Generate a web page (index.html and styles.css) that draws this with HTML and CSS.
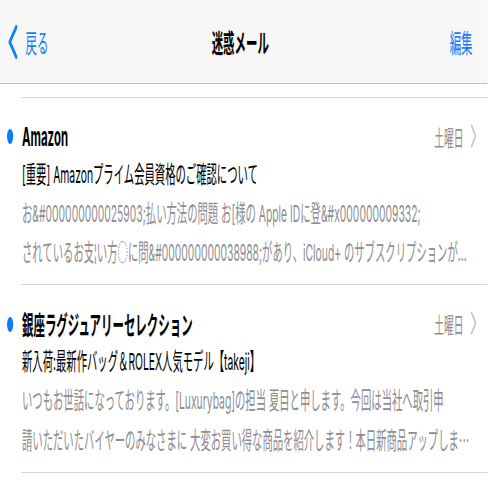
FILE: index.html
```html
<!DOCTYPE html>
<html lang="ja">
<head>
    <meta charset="UTF-8">
    <meta name="viewport" content="width=device-width, initial-scale=1.0">
    <title>迷惑メール</title>
    <link rel="stylesheet" href="styles.css">
</head>
<body>

    <div class="screen">

        <!-- Barra de navegação -->
        <header class="navbar">
            <a class="back" href="#">
                <svg viewBox="0 0 22 34"><polyline points="19,2 4,17 19,32" /></svg>
                <span>戻る</span>
            </a>
            <h1 class="title">迷惑メール</h1>
            <a class="edit" href="#">編集</a>
        </header>

        <!-- Lista de mensagens -->
        <ul class="mail-list">
            <li class="mail">
                <span class="dot"></span>
                <div class="mail-body">
                    <div class="mail-head">
                        <span class="sender">Amazon</span>
                        <span class="date">土曜日 <svg viewBox="0 0 14 24"><polyline points="2,1 12,12 2,23" /></svg></span>
                    </div>
                    <div class="subject">[重要] Amazonプライム会員資格のご確認について</div>
                    <div class="preview">
                        <div class="line">お&amp;#000000000025903;払い方法の問題 お[様の Apple IDに登&amp;#x000000009332;</div>
                        <div class="line">されているお支¦い方◌に問&amp;#000000000038988;があり、iCloud+ のサブスクリプションが...</div>
                    </div>
                </div>
            </li>

            <li class="mail">
                <span class="dot"></span>
                <div class="mail-body">
                    <div class="mail-head">
                        <span class="sender">銀座ラグジュアリーセレクション</span>
                        <span class="date">土曜日 <svg viewBox="0 0 14 24"><polyline points="2,1 12,12 2,23" /></svg></span>
                    </div>
                    <div class="subject">新入荷:最新作バッグ＆ROLEX人気モデル【takeji】</div>
                    <div class="preview">
                        <div class="line">いつもお世話になっております。[Luxurybag]の担当 夏目と申します。今回は当社へ取引申</div>
                        <div class="line">請いただいたバイヤーのみなさまに 大変お買い得な商品を紹介します！本日新商品アップしま<span class="jp">…</span></div>
                    </div>
                </div>
            </li>
        </ul>

    </div>

</body>
</html>
```

FILE: styles.css
```css
html, body { margin: 0; overflow: hidden; background: #fff; }
body { font-family: "Inter", "Noto Sans CJK JP", sans-serif; color: #000; }

/* a captura está comprimida na horizontal: a tela é montada larga e escalada */
.screen { width: 1108px; transform: scaleX(0.44); transform-origin: 0 0; }

.navbar { display: grid; grid-template-columns: 1fr auto 1fr; align-items: center; height: 83px; padding: 0 34px 0 18px; background: #f7f7f7; border-bottom: 1px solid #bcbcbc; }
.back { display: flex; align-items: center; gap: 18px; color: #147efb; text-decoration: none; font-size: 26px; }
.back svg { width: 22px; height: 34px; fill: none; stroke: #147efb; stroke-width: 5; stroke-linecap: round; stroke-linejoin: round; }
.title { margin: 0; font-size: 26px; font-weight: 700; }
.edit { justify-self: end; color: #147efb; text-decoration: none; font-size: 26px; }

.mail-list { list-style: none; margin: 13px 0 0; padding: 0; }
.mail { display: grid; grid-template-columns: 48px 1fr; }
.dot { width: 14px; height: 15px; margin: 32px 0 0 16px; border-radius: 50%; background: #0a7aff; }
.mail-body { min-width: 0; padding: 18px 25px 12px 2px; border-bottom: 1px solid #d8d8d8; }
.mail:first-child .mail-body { border-top: 1px solid #d8d8d8; }

.mail-head { display: flex; align-items: center; height: 40px; }
.sender { flex: 1; font-size: 26px; font-weight: 700; }
.date { display: flex; align-items: center; gap: 16px; font-size: 22px; color: #8e8e93; }
.date svg { width: 14px; height: 24px; fill: none; stroke: #c4c4c8; stroke-width: 3; }

.subject { font-size: 23.5px; line-height: 38px; white-space: nowrap; }
.preview { font-size: 23.5px; line-height: 39px; color: #8e8e93; }
.preview .line { white-space: nowrap; overflow: hidden; text-overflow: ellipsis; }
.jp { font-family: "Noto Sans CJK JP", sans-serif; }
```
